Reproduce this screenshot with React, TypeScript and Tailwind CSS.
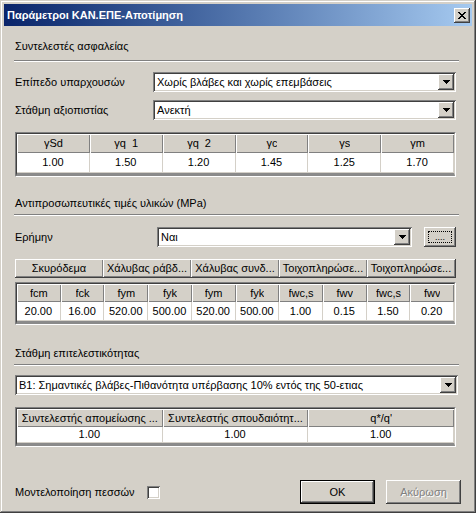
import React from "react";

const raised =
  "shadow-[inset_-1px_-1px_0_#404040,inset_1px_1px_0_#ffffff,inset_-2px_-2px_0_#808080,inset_2px_2px_0_#d4d0c8]";
const sunken =
  "shadow-[inset_1px_1px_0_#808080,inset_-1px_-1px_0_#ffffff,inset_2px_2px_0_#404040,inset_-2px_-2px_0_#d4d0c8]";

function Separator() {
  return (
    <div className="mr-[-3px] ml-[-1px] flex flex-col">
      <div className="h-px bg-[#808080]" />
      <div className="h-px bg-white" />
    </div>
  );
}

function DropArrow() {
  return (
    <div className={`flex h-full w-[16px] items-center justify-center bg-[#d4d0c8] ${raised}`}>
      <svg width="7" height="4" viewBox="0 0 7 4">
        <path d="M0 0h7v1h-1v1h-1v1h-1v1h-1v-1h-1v-1h-1v-1h-1z" fill="#000" />
      </svg>
    </div>
  );
}

function Combo({ value, className = "" }: { value: string; className?: string }) {
  return (
    <div className={`flex h-[20px] items-stretch bg-white p-[2px] ${sunken} ${className}`}>
      <div className="flex flex-1 items-center truncate pl-[2px] text-black">{value}</div>
      <DropArrow />
    </div>
  );
}

function Grid({
  cols,
  heads,
  values,
  headH,
  rowH,
}: {
  cols: string;
  heads: string[];
  values: string[];
  headH: string;
  rowH: string;
}) {
  return (
    <div className="border border-t-[#808080] border-l-[#808080] border-r-white border-b-white">
      <div className="border-t border-l border-t-[#404040] border-l-[#404040] border-b-[3px] border-b-[#8a8a8a] border-r border-r-[#d4d0c8]">
        <div className={`grid ${cols}`}>
          {heads.map((h, i) => (
            <div
              key={i}
              className={`${headH} flex items-center justify-center truncate bg-[#d4d0c8] px-[3px] shadow-[inset_1px_1px_0_#ffffff,inset_-1px_-1px_0_#808080]`}
            >
              <span className="truncate whitespace-pre">{h}</span>
            </div>
          ))}
          {values.map((v, i) => (
            <div
              key={i}
              className={`${rowH} flex items-center justify-center border-r border-b border-[#d4d0c8] bg-white`}
            >
              {v}
            </div>
          ))}
        </div>
      </div>
    </div>
  );
}

function Button({ label, disabled, def }: { label: string; disabled?: boolean; def?: boolean }) {
  return (
    <div className={`h-[24px] w-[75px] ${def ? "border border-black" : ""}`}>
      <div className={`flex h-full items-center justify-center bg-[#d4d0c8] ${raised}`}>
        {disabled ? (
          <span className="text-[#808080] [text-shadow:1px_1px_0_#ffffff]">{label}</span>
        ) : (
          <span className="text-black">{label}</span>
        )}
      </div>
    </div>
  );
}

export default function App() {
  return (
    <div
      className="h-[513px] w-[476px] bg-[#d4d0c8] p-[4px] font-['Liberation_Sans',Arial,sans-serif] text-[11px] leading-[13px] text-black shadow-[inset_-1px_-1px_0_#404040,inset_1px_1px_0_#d4d0c8,inset_-2px_-2px_0_#808080,inset_2px_2px_0_#ffffff]"
    >
      <div className="flex h-full flex-col">
        {/* Title bar */}
        <div className="flex h-[22px] items-center justify-between bg-linear-to-r from-[#0a246a] to-[#a6caf0] pl-[3px] pr-[2px]">
          <span className="text-[11px] font-bold text-white">Παράμετροι ΚΑΝ.ΕΠΕ-Αποτίμηση</span>
          <div className={`flex h-[15px] w-[16px] items-center justify-center bg-[#d4d0c8] ${raised}`}>
            <svg width="8" height="7" viewBox="0 0 8 7" shapeRendering="crispEdges">
              <path
                d="M0 0h2v1h1v1h2v-1h1v-1h2v1h-1v1h-1v1h-1v1h1v1h1v1h1v1h-2v-1h-1v-1h-2v1h-1v1h-2v-1h1v-1h1v-1h1v-1h-1v-1h-1v-1h-1z"
                fill="#000"
              />
            </svg>
          </div>
        </div>

        {/* Content */}
        <div className="flex flex-col pl-[11px] pr-[16px]">
          <div className="mt-[14px]">Συντελεστές ασφαλείας</div>
          <div className="mt-[7px]">
            <Separator />
          </div>

          <div className="mt-[10px] flex items-center">
            <div className="w-[138px]">Επίπεδο υπαρχουσών</div>
            <Combo value="Χωρίς βλάβες και χωρίς επεμβάσεις" className="flex-1" />
          </div>
          <div className="mt-[8px] flex items-center">
            <div className="w-[138px]">Στάθμη αξιοπιστίας</div>
            <Combo value="Ανεκτή" className="flex-1" />
          </div>

          <div className="mt-[12px]">
            <Grid
              cols="grid-cols-6"
              heads={["γSd", "γq  1", "γq  2", "γc", "γs", "γm"]}
              values={["1.00", "1.50", "1.20", "1.45", "1.25", "1.70"]}
              headH="h-[19px]"
              rowH="h-[20px]"
            />
          </div>

          <div className="mt-[20px]">Αντιπροσωπευτικές τιμές υλικών (MPa)</div>
          <div className="mt-[4px]">
            <Separator />
          </div>

          <div className="mt-[11px] flex items-center">
            <div className="w-[142px]">Ερήμην</div>
            <Combo value="Ναι" className="w-[255px]" />
            <div className="ml-auto h-[20px] w-[32px]">
              <div className={`flex h-full items-center justify-center bg-[#d4d0c8] p-[4px] ${raised}`}>
                <div className="flex h-full w-full items-end justify-center border border-dotted border-black text-[9px] leading-[9px]">
                  ....
                </div>
              </div>
            </div>
          </div>

          <div className="mt-[12px] grid h-[19px] grid-cols-5 border-r border-b border-[#404040]">
            {["Σκυρόδεμα", "Χάλυβας ράβδ...", "Χάλυβας συνδ...", "Τοιχοπληρώσε...", "Τοιχοπληρώσε..."].map((g, i) => (
              <div
                key={i}
                className="flex items-center justify-center truncate bg-[#d4d0c8] shadow-[inset_1px_1px_0_#ffffff,inset_-1px_-1px_0_#808080]"
              >
                {g}
              </div>
            ))}
          </div>

          <div className="mt-[4px]">
            <Grid
              cols="grid-cols-10"
              heads={["fcm", "fck", "fym", "fyk", "fym", "fyk", "fwc,s", "fwv", "fwc,s", "fwv"]}
              values={["20.00", "16.00", "520.00", "500.00", "520.00", "500.00", "1.00", "0.15", "1.50", "0.20"]}
              headH="h-[18px]"
              rowH="h-[19px]"
            />
          </div>

          <div className="mt-[22px]">Στάθμη επιτελεστικότητας</div>
          <div className="mt-[4px]">
            <Separator />
          </div>

          <div className="mt-[9px]">
            <Combo value="B1: Σημαντικές βλάβες-Πιθανότητα υπέρβασης 10% εντός της 50-ετιας" className="mr-[-2px]" />
          </div>

          <div className="mt-[12px]">
            <Grid
              cols="grid-cols-3"
              heads={["Συντελεστής απομείωσης ...", "Συντελεστής σπουδαιότητ...", "q*/q'"]}
              values={["1.00", "1.00", "1.00"]}
              headH="h-[18px]"
              rowH="h-[16px]"
            />
          </div>

          <div className="mt-[33px] flex items-center">
            <div className="w-[132px]">Μοντελοποίηση πεσσών</div>
            <div className={`h-[13px] w-[13px] bg-white ${sunken}`} />
            <div className="ml-auto mr-[-5px] flex gap-[11px]">
              <Button label="OK" def />
              <Button label="Ακύρωση" disabled />
            </div>
          </div>
        </div>
      </div>
    </div>
  );
}
